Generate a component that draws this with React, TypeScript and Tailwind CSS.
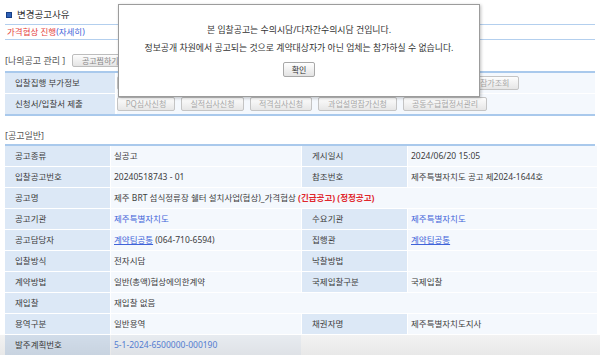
import React from "react";

const font = { fontFamily: "'Noto Sans', 'Noto Sans CJK KR', sans-serif" };

function Btn({ w, children }: { w: string; children: React.ReactNode }) {
  return (
    <div
      className={`${w} h-[14px] shrink-0 flex items-center justify-center rounded-[2px] border border-[#c4c4c4] bg-gradient-to-b from-[#fdfdfd] to-[#e6e6e6] text-[8px] leading-none text-[#a8a8a8] whitespace-nowrap overflow-hidden`}
    >
      {children}
    </div>
  );
}

function L({ children }: { children?: React.ReactNode }) {
  return (
    <div className="h-[20px] bg-[#dce8f6] pl-[10px] flex items-center text-[#3d3d3d] whitespace-nowrap">
      {children}
    </div>
  );
}

function V({ children, span }: { children?: React.ReactNode; span?: boolean }) {
  return (
    <div
      className={`h-[20px] bg-[#f4f8fd] pl-[3px] flex items-center text-[#3d3d3d] whitespace-nowrap ${
        span ? "col-span-3" : ""
      }`}
    >
      {children}
    </div>
  );
}

const blue = "text-[#3f63d9]";

export default function App() {
  return (
    <div
      className="relative w-[600px] h-[355px] overflow-hidden bg-white text-[8.5px] leading-none text-[#333]"
      style={font}
    >
      <div className="px-[5px]">
        {/* title */}
        <div className="h-[25px] pt-[5px] flex items-center gap-[5px] border-b border-[#b3cfee] pl-[1px]">
          <div className="w-[6px] h-[6px] bg-[#2f62b8] border border-[#173f85]" />
          <span className="text-[9.5px] text-[#333]">변경공고사유</span>
        </div>
        <div className="h-[15px] flex items-center border-b border-[#b3cfee] pl-[2px]">
          <span className="text-[#e5433d]">가격협상 진행</span>
          <span className="text-[#3f63d9]">(자세히)</span>
        </div>

        {/* my notice management */}
        <div className="h-[31px] pt-[10px] flex items-center gap-[7px]">
          <span className="text-[9px] text-[#555]">[나의공고 관리 ]</span>
          <div className="w-[56px] h-[13px] flex items-center justify-center rounded-[2px] border border-[#bdbdbd] bg-gradient-to-b from-[#fdfdfd] to-[#e4e4e4] text-[8px] text-[#888]">
            공고찜하기
          </div>
        </div>

        {/* table 1 */}
        <div className="border-t-2 border-b-2 border-[#a9c9ec] flex flex-col gap-px bg-white">
          <div className="flex gap-[2px]">
            <div className="w-[110px] h-[20px] bg-[#dce8f6] pl-[10px] flex items-center text-[#3d3d3d]">
              입찰집행 부가정보
            </div>
            <div className="flex-1 h-[20px] bg-[#f4f8fd] flex items-center gap-[6px]">
              <Btn w="w-[100px]">입찰서제출</Btn>
              <Btn w="w-[100px]">입찰서조회</Btn>
              <Btn w="w-[106px]">제안서제출</Btn>
              <Btn w="w-[78px]">공동수급참가조회</Btn>
            </div>
          </div>
          <div className="flex gap-[2px]">
            <div className="w-[110px] h-[20px] bg-[#dce8f6] pl-[10px] flex items-center text-[#3d3d3d]">
              신청서/입찰서 제출
            </div>
            <div className="flex-1 h-[20px] bg-[#f4f8fd] flex items-center gap-[6px]">
              <Btn w="w-[58px]">PQ심사신청</Btn>
              <Btn w="w-[63px]">실적심사신청</Btn>
              <Btn w="w-[62px]">적격심사신청</Btn>
              <Btn w="w-[79px]">과업설명참가신청</Btn>
              <Btn w="w-[84px]">공동수급협정서관리</Btn>
            </div>
          </div>
        </div>

        {/* general */}
        <div className="h-[28px] pt-[10px] flex items-center">
          <span className="text-[9px] text-[#555]">[공고일반]</span>
        </div>

        <div className="border-t-2 border-[#a9c9ec] grid grid-cols-[105px_190px_105px_189px] gap-px bg-white">
          <L>공고종류</L>
          <V>실공고</V>
          <L>게시일시</L>
          <V>2024/06/20 15:05</V>

          <L>입찰공고번호</L>
          <V>20240518743 - 01</V>
          <L>참조번호</L>
          <V>제주특별자치도 공고 제2024-1644호</V>

          <L>공고명</L>
          <V span>
            제주 BRT 섬식정류장 쉘터 설치사업(협상)_가격협상&nbsp;
            <span className="text-[#e0262b] font-bold">(긴급공고) (정정공고)</span>
          </V>

          <L>공고기관</L>
          <V>
            <span className={blue}>제주특별자치도</span>
          </V>
          <L>수요기관</L>
          <V>
            <span className={blue}>제주특별자치도</span>
          </V>

          <L>공고담당자</L>
          <V>
            <span className={`${blue} underline`}>계약팀공통</span>&nbsp;(064-710-6594)
          </V>
          <L>집행관</L>
          <V>
            <span className={`${blue} underline`}>계약팀공통</span>
          </V>

          <L>입찰방식</L>
          <V>전자시담</V>
          <L>낙찰방법</L>
          <V />

          <L>계약방법</L>
          <V>일반(총액)협상에의한계약</V>
          <L>국제입찰구분</L>
          <V>국제입찰</V>

          <L>재입찰</L>
          <V span>재입찰 없음</V>

          <L>용역구분</L>
          <V>일반용역</V>
          <L>채권자명</L>
          <V>제주특별자치도지사</V>

          <L>발주계획번호</L>
          <V>
            <span className="text-[#5a86e0]">5-1-2024-6500000-000190</span>
          </V>
        </div>
      </div>

      {/* bottom fade */}
      <div className="absolute left-0 right-0 bottom-0 h-[20px] bg-gradient-to-b from-[rgba(0,0,0,0.05)] to-[rgba(0,0,0,0.09)] pointer-events-none" />

      {/* dialog */}
      <div className="absolute left-[118px] top-[4px] w-[362px] h-[93px] bg-white border border-[#9c9c9c] shadow-[1px_1px_3px_rgba(0,0,0,0.25)] flex flex-col items-center pt-[16px]">
        <div className="h-[18px] flex items-center text-[8.9px] text-[#333]">
          본 입찰공고는 수의시담/다자간수의시담 건입니다.
        </div>
        <div className="h-[18px] flex items-center text-[8.9px] text-[#333]">
          정보공개 차원에서 공고되는 것으로 계약대상자가 아닌 업체는 참가하실 수 없습니다.
        </div>
        <div className="mt-[5px] w-[32px] h-[15px] flex items-center justify-center rounded-[2px] border border-[#a8a8a8] bg-gradient-to-b from-[#ffffff] to-[#e3e3e3] text-[8px] text-[#333]">
          확인
        </div>
      </div>
    </div>
  );
}
